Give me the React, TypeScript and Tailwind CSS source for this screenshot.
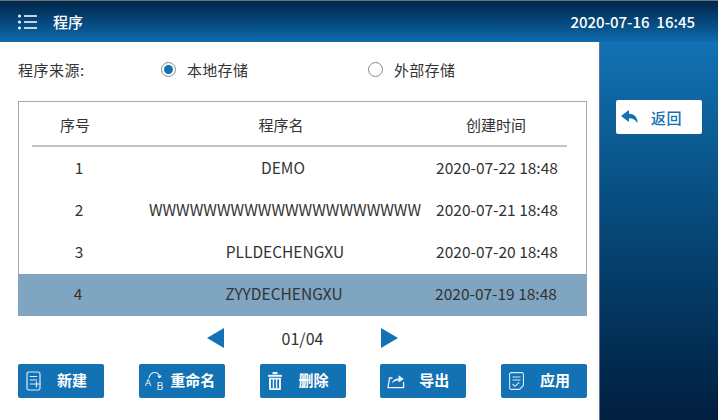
import React from "react";

const font = { fontFamily: '"Noto Sans CJK SC", "Noto Sans", sans-serif' };

const rows = [
  ["1", "DEMO", "2020-07-22 18:48"],
  ["2", "WWWWWWWWWWWWWWWWWWWW", "2020-07-21 18:48"],
  ["3", "PLLDECHENGXU", "2020-07-20 18:48"],
  ["4", "ZYYDECHENGXU", "2020-07-19 18:48"],
];

const IconNew = () => (
  <svg width="16" height="20" viewBox="0 0 16 20" fill="none" stroke="#d6ebf9" strokeWidth="1.200">
    <rect x="1" y="1" width="13" height="18" rx="1.800" />
    <path d="M3.800 5.500h7.400M3.800 9h7.400M3.800 13h11.200M10.500 10.500v6" />
  </svg>
);
const IconRename = () => (
  <svg width="19" height="20" viewBox="0 0 19 20" fill="none" stroke="#e4f1fa" strokeWidth="1.200" className="overflow-visible">
    <path d="M4 7C5 3.200 7.500 1.500 9.800 1.500c2.400 0 4.200 1.500 4.700 4.200" />
    <path d="M12.800 4.500l1.800 2 1.800-2" />
    <text x="0" y="15" fontSize="9.500" fill="#e4f1fa" stroke="none" fontFamily="Noto Sans">A</text>
    <text x="11.500" y="18.500" fontSize="10.500" fill="#e4f1fa" stroke="none" fontFamily="Noto Sans">B</text>
  </svg>
);
const IconTrash = () => (
  <svg width="14" height="18" viewBox="0 0 14 18" fill="#eaf4fb">
    <rect x="0" y="2.800" width="14" height="2" />
    <rect x="4.500" y="0" width="5" height="2.200" rx="0.500" />
    <path d="M1 5.800h12V17a1 1 0 0 1-1 1H2a1 1 0 0 1-1-1zM3 7.400v8.800h1.700V7.400zm3.150 0v8.800h1.700V7.400zm3.150 0v8.800H11V7.400z" fillRule="evenodd" />
  </svg>
);
const IconExport = () => (
  <svg width="18" height="16" viewBox="0 0 18 16" fill="none">
    <path d="M5.500 5H2.600L1 14.600h15.600V9" stroke="#eaf4fb" strokeWidth="1.300" />
    <path d="M5 10.500c.5-3.200 3-5 6.600-5V2.200L16.800 6l-5.200 3.600V7.400C9 7.300 6.800 8.200 5 10.500z" fill="#eaf4fb" />
  </svg>
);
const IconApply = () => (
  <svg width="15" height="18" viewBox="0 0 15 18" fill="none" stroke="#d6ebf9" strokeWidth="1.100">
    <path d="M2.200.6h10.600a1.600 1.600 0 0 1 1.600 1.600v11.300l-3.900 3.900H2.200a1.600 1.600 0 0 1-1.600-1.600V2.200A1.600 1.600 0 0 1 2.200.6z" />
    <path d="M3.500 5h8M3.500 8h8M3.600 12l2.200 2.300 4.400-3.800" />
  </svg>
);

const buttons: [React.ReactNode, string][] = [
  [<IconNew />, "新建"],
  [<IconRename />, "重命名"],
  [<IconTrash />, "删除"],
  [<IconExport />, "导出"],
  [<IconApply />, "应用"],
];

function Radio({ checked, label, width }: { checked?: boolean; label: string; width: string }) {
  return (
    <div className={`flex items-center gap-[11px] ${width}`}>
      <span className="flex h-[15px] w-[15px] items-center justify-center rounded-full border border-[#8a8a8a] bg-white">
        {checked && <span className="h-[9px] w-[9px] rounded-full bg-[#1272b4]" />}
      </span>
      <span className="text-[15px] leading-none tracking-[0.3px] text-[#333]">{label}</span>
    </div>
  );
}

export default function App() {
  return (
    <div style={font} className="flex h-[420px] w-[718px] flex-col overflow-hidden bg-white">
      <header className="flex h-[42px] shrink-0 items-center justify-between border-t border-t-[#6c7480] bg-gradient-to-b from-[#01264a] to-[#0f6cae] pl-[18px] pr-[23px] text-white">
        <div className="flex items-center gap-[16px]">
          <svg width="19" height="16" viewBox="0 0 19 16" fill="#f2f7fb">
            <circle cx="1.500" cy="2" r="1.500" />
            <circle cx="1.500" cy="8" r="1.500" />
            <circle cx="1.500" cy="14" r="1.500" />
            <rect x="6" y="1.200" width="13" height="1.600" />
            <rect x="6" y="7.200" width="13" height="1.600" />
            <rect x="6" y="13.200" width="13" height="1.600" />
          </svg>
          <span className="text-[15px] font-medium leading-none">程序</span>
        </div>
        <span className="text-[15px] font-medium leading-none">2020-07-16&nbsp; 16:45</span>
      </header>

      <div className="flex min-h-0 flex-1">
        <main className="flex w-[600px] shrink-0 flex-col border-r border-r-[#5d7890] pl-[18px] pr-[12px]">
          <div className="flex h-[59px] shrink-0 items-center pb-[5px]">
            <span className="w-[143px] text-[15px] leading-none tracking-[0.5px] text-[#333]">程序来源:</span>
            <Radio checked label="本地存储" width="w-[207px]" />
            <Radio label="外部存储" width="" />
          </div>

          <div className="h-[215px] shrink-0 border border-[#a8a8a8] border-b-0">
            <div className="ml-[13px] mr-[19px] flex h-[45px] items-center border-b-2 border-b-[#c4c4c4] pt-[3px] text-[15px] text-[#333]">
              <div className="grid w-full grid-cols-[86px_326px_104px] text-center">
                <span>序号</span>
                <span>程序名</span>
                <span>创建时间</span>
              </div>
            </div>
            <div className="h-[1px]" />
            {rows.map((r, i) => (
              <div
                key={r[0]}
                className={`grid h-[42px] grid-cols-[120px_292px_132px] items-center pb-[2px] text-center text-[15.500px] text-[#333] ${i === 3 ? "-mx-px bg-[#7fa5c0]" : ""}`}
              >
                <span>{r[0]}</span>
                <span className={`whitespace-nowrap ${i === 0 ? "pr-[4px]" : ""}`}>{r[1]}</span>
                <span className="whitespace-nowrap">{r[2]}</span>
              </div>
            ))}
          </div>

          <div className="flex h-[48px] shrink-0 items-center justify-center gap-[58px] pb-[4px]">
            <svg width="17" height="20" viewBox="0 0 17 20" fill="#1272b4"><path d="M17 0v20L0 10z" /></svg>
            <span className="text-[16px] leading-none text-[#333]">01/04</span>
            <svg width="17" height="20" viewBox="0 0 17 20" fill="#1272b4"><path d="M0 0v20l17-10z" /></svg>
          </div>

          <div className="flex justify-between">
            {buttons.map(([icon, label]) => (
              <button key={label} className="flex h-[34px] w-[86px] items-center rounded-[2px] bg-[#1272b4] text-white">
                <span className="flex w-[28px] shrink-0 justify-center pl-[3px]">{icon}</span>
                <span className="flex-1 pb-[3px] pr-[6px] text-center text-[15px] font-bold leading-none">{label}</span>
              </button>
            ))}
          </div>
        </main>

        <aside className="flex-1 bg-gradient-to-b from-[#1272b4] to-[#011f3f] pl-[16px] pr-[16px] pt-[58px]">
          <button className="flex h-[34px] w-full items-center rounded-[2px] bg-white text-[#1272b4]">
            <svg className="ml-[5px]" width="18" height="14" viewBox="0 0 18 14" fill="#1272b4">
              <path d="M8 0 0 6l8 6V8.200c4 0 6.500 1.500 8.500 5 .3-5.500-3-9.500-8.500-9.500z" />
            </svg>
            <span className="ml-[12px] text-[15px] font-medium leading-none tracking-[0.5px]">返回</span>
          </button>
        </aside>
      </div>
    </div>
  );
}
